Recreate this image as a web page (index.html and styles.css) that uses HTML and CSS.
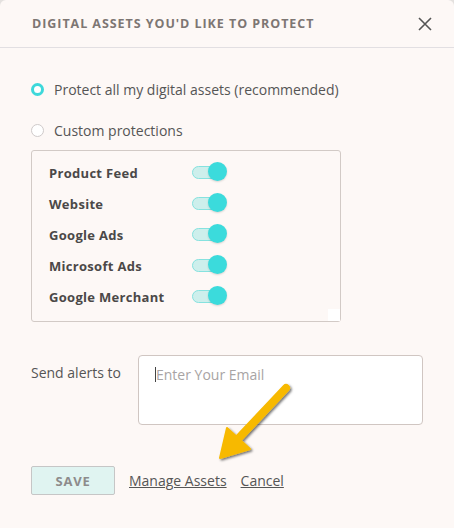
FILE: index.html
```html
<!DOCTYPE html>
<html lang="en">
<head>
  <meta charset="UTF-8" />
  <title>Digital Assets</title>
  <link rel="stylesheet" href="styles.css">
</head>
<body>
  <div class="modal">
    <div class="modal-header">
      <h2>Digital assets you'd like to protect</h2>
      <button class="close" aria-label="Close">
        <svg width="14" height="14" viewBox="0 0 14 14"><path d="M1 1L13 13M13 1L1 13" stroke="#555" stroke-width="1.6" fill="none"/></svg>
      </button>
    </div>

    <div class="modal-body">
      <label class="radio checked"><span class="dot"></span>Protect all my digital assets (recommended)</label>
      <label class="radio"><span class="dot"></span>Custom protections</label>

      <div class="assets">
        <div class="asset"><span>Product Feed</span><span class="toggle"></span></div>
        <div class="asset"><span>Website</span><span class="toggle"></span></div>
        <div class="asset"><span>Google Ads</span><span class="toggle"></span></div>
        <div class="asset"><span>Microsoft Ads</span><span class="toggle"></span></div>
        <div class="asset"><span>Google Merchant</span><span class="toggle"></span></div>
        <span class="corner"></span>
      </div>

      <div class="alerts">
        <span class="alerts-label">Send alerts to</span>
        <div class="email"><span class="caret"></span><span class="placeholder">Enter Your Email</span></div>
      </div>

      <div class="actions">
        <button class="btn-save">SAVE</button>
        <a href="#">Manage Assets</a>
        <a href="#">Cancel</a>
      </div>
    </div>

    <svg class="arrow" width="90" height="90" viewBox="0 0 90 90">
      <defs>
        <filter id="sh" x="-30%" y="-30%" width="160%" height="160%">
          <feDropShadow dx="1.5" dy="1.5" stdDeviation="1.2" flood-color="#000" flood-opacity="0.55"/>
        </filter>
      </defs>
      <g filter="url(#sh)">
        <path d="M74 10L24 63" stroke="#f7b900" stroke-width="8" stroke-linecap="round" fill="none"/>
        <path d="M8 80L15 50L38 71Z" fill="#f7b900" stroke="#f7b900" stroke-width="2" stroke-linejoin="round"/>
      </g>
    </svg>
  </div>
</body>
</html>
```

FILE: styles.css
```css
html {
  background: #e4e1df;
}

body {
  margin: 0;
  font-family: 'Open Sans', 'DejaVu Sans', sans-serif;
  color: #505050;
}

.modal {
  position: relative;
  background: #fdf8f6;
  border-radius: 6px 6px 0 0;
  width: 454px;
  height: 528px;
}

.modal-header {
  display: flex;
  justify-content: space-between;
  align-items: center;
  height: 47px;
  padding: 0 22px 0 32px;
  border-bottom: 1px solid #e2dfe2;
}

.modal-header h2 {
  margin: 0;
  font-size: 12.5px;
  font-weight: 700;
  letter-spacing: 0.95px;
  text-transform: uppercase;
  color: #7d7673;
}

.close {
  background: none;
  border: none;
  padding: 0;
  display: flex;
}

.modal-body {
  padding: 29px 31px 0;
}

.radio {
  display: flex;
  align-items: center;
  font-size: 14px;
  color: #555;
  height: 25px;
  margin-bottom: 16px;
}

.dot {
  width: 13px;
  height: 13px;
  border: 1px solid #cfcaca;
  border-radius: 50%;
  background: #fff;
  box-sizing: border-box;
  margin-right: 10px;
}

.radio.checked .dot {
  border: 3px solid #3dd8da;
}

.assets {
  position: relative;
  width: 310px;
  box-sizing: border-box;
  border: 1px solid #d2cac6;
  border-radius: 3px;
  padding: 6px 0 9px 17px;
  margin-top: -9px;
}

.asset {
  display: flex;
  align-items: center;
  height: 31px;
  font-size: 13px;
  font-weight: 700;
  letter-spacing: 0.3px;
  color: #4b4848;
}

.asset span:first-child {
  width: 143px;
}

.toggle {
  position: relative;
  width: 28px;
  height: 11px;
  border: 1px solid #86e2df;
  border-radius: 7px;
  background: #cdefec;
}

.toggle::after {
  content: '';
  position: absolute;
  right: -6px;
  top: -5px;
  width: 19px;
  height: 19px;
  border-radius: 50%;
  background: #3bdbdc;
  box-shadow: 0 1px 2px rgba(0,0,0,0.15);
}

.corner {
  position: absolute;
  right: 0;
  bottom: 0;
  width: 12px;
  height: 12px;
  background: #fff;
}

.alerts {
  display: flex;
  margin-top: 33px;
}

.alerts-label {
  width: 107px;
  font-size: 14px;
  padding-top: 8px;
  color: #555;
}

.email {
  display: flex;
  align-items: flex-start;
  width: 285px;
  height: 70px;
  box-sizing: border-box;
  background: #fff;
  border: 1px solid #d0c6c2;
  border-radius: 4px;
  padding: 9px 16px;
}

.caret {
  width: 1px;
  height: 15px;
  margin-top: 2px;
  background: #444;
}

.placeholder {
  font-size: 14px;
  color: #a8a4a4;
}

.actions {
  display: flex;
  align-items: center;
  gap: 14px;
  margin-top: 41px;
}

.btn-save {
  width: 84px;
  height: 29px;
  background: #e0f4f1;
  border: 1px solid #c6c6c6;
  border-radius: 2px;
  font-family: inherit;
  font-size: 13px;
  font-weight: 700;
  letter-spacing: 0.8px;
  color: #8d8b8b;
}

.actions a {
  font-size: 14px;
  color: #555;
}

.arrow {
  position: absolute;
  left: 212px;
  top: 378px;
}
```
